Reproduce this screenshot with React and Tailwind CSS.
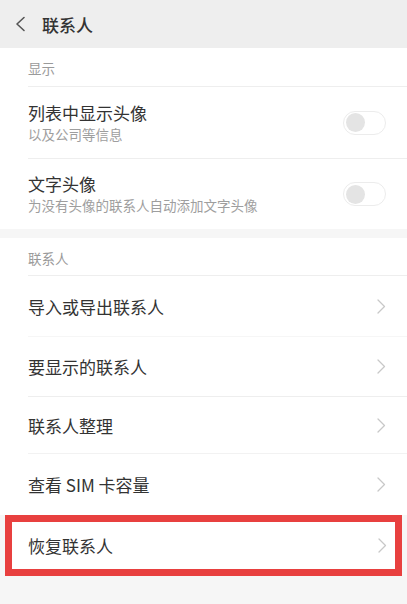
import React, { useState } from 'react';

const font = { fontFamily: '"Noto Sans CJK SC", "Noto Sans", sans-serif' };

function Chevron() {
  return (
    <svg width="9" height="15" viewBox="0 0 9 15" fill="none" className="shrink-0">
      <path d="M1 1l6.5 6.5L1 14" stroke="#c8c8c8" strokeWidth="1.3" strokeLinecap="round" strokeLinejoin="round" />
    </svg>
  );
}

function Toggle({ on, onChange }) {
  return (
    <button
      type="button"
      onClick={onChange}
      className="w-[43px] h-[24px] rounded-full border border-[#ececec] bg-white flex items-center px-[2px] shrink-0"
    >
      <span className="w-[19px] h-[19px] rounded-full bg-[#e4e4e4]" />
    </button>
  );
}

function SectionLabel({ children, className }) {
  return (
    <div className={`pl-[28px] pt-[4px] flex items-center ${className}`}>
      <span className="text-[13.5px] text-[#9a9a9a] leading-none">{children}</span>
    </div>
  );
}

function ToggleRow({ title, sub, className }) {
  const [on, setOn] = useState(false);
  return (
    <div className={`ml-[28px] pr-[21px] flex items-center justify-between ${className}`}>
      <div className="flex flex-col">
        <span className="text-[17px] leading-none text-[#333]">{title}</span>
        <span className="mt-[7px] text-[13.5px] leading-none text-[#9e9e9e]">{sub}</span>
      </div>
      <Toggle on={on} onChange={() => setOn(!on)} />
    </div>
  );
}

function LinkRow({ title, className }) {
  return (
    <div className={`ml-[28px] pr-[21px] flex items-center justify-between ${className}`}>
      <span className="text-[17px] leading-none text-[#333]">{title}</span>
      <Chevron />
    </div>
  );
}

export default function App() {
  return (
    <div className="w-[407px] h-[604px] bg-[#f6f6f6] overflow-hidden" style={font}>
      {/* Header */}
      <div className="h-[48px] bg-[#eeeeee] flex items-center pl-[15px]">
        <svg width="11" height="16" viewBox="0 0 11 16" fill="none">
          <path d="M9 1.5L2 8l7 6.5" stroke="#555" strokeWidth="1.6" strokeLinecap="round" strokeLinejoin="round" />
        </svg>
        <span className="ml-[16px] text-[17px] font-medium text-[#333] leading-none">联系人</span>
      </div>

      {/* Display section */}
      <div className="bg-white">
        <SectionLabel className="h-[38px]">显示</SectionLabel>
        <div className="ml-[28px] border-t border-[#eeeeee]" />
        <ToggleRow title="列表中显示头像" sub="以及公司等信息" className="h-[71px]" />
        <div className="ml-[28px] border-t border-[#eeeeee]" />
        <ToggleRow title="文字头像" sub="为没有头像的联系人自动添加文字头像" className="h-[70px]" />
      </div>

      <div className="h-[9px]" />

      {/* Contacts section */}
      <div className="bg-white">
        <SectionLabel className="h-[37px]">联系人</SectionLabel>
        <div className="ml-[28px] border-t border-[#eeeeee]" />
        <LinkRow title="导入或导出联系人" className="h-[60px]" />
        <div className="ml-[28px] border-t border-[#f6f6f6]" />
        <LinkRow title="要显示的联系人" className="h-[59px]" />
        <div className="ml-[28px] border-t border-[#eeeeee]" />
        <LinkRow title="联系人整理" className="h-[56px]" />
        <div className="ml-[28px] border-t border-[#f2f2f2]" />
        <LinkRow title="查看 SIM 卡容量" className="h-[61px]" />
      </div>

      {/* Highlighted row */}
      <div className="mx-[5px] h-[61px] border-[7px] border-[#e8403f] bg-white flex items-center justify-between pl-[16px] pr-[8px]">
        <span className="text-[17px] leading-none text-[#333]">恢复联系人</span>
        <Chevron />
      </div>
    </div>
  );
}
